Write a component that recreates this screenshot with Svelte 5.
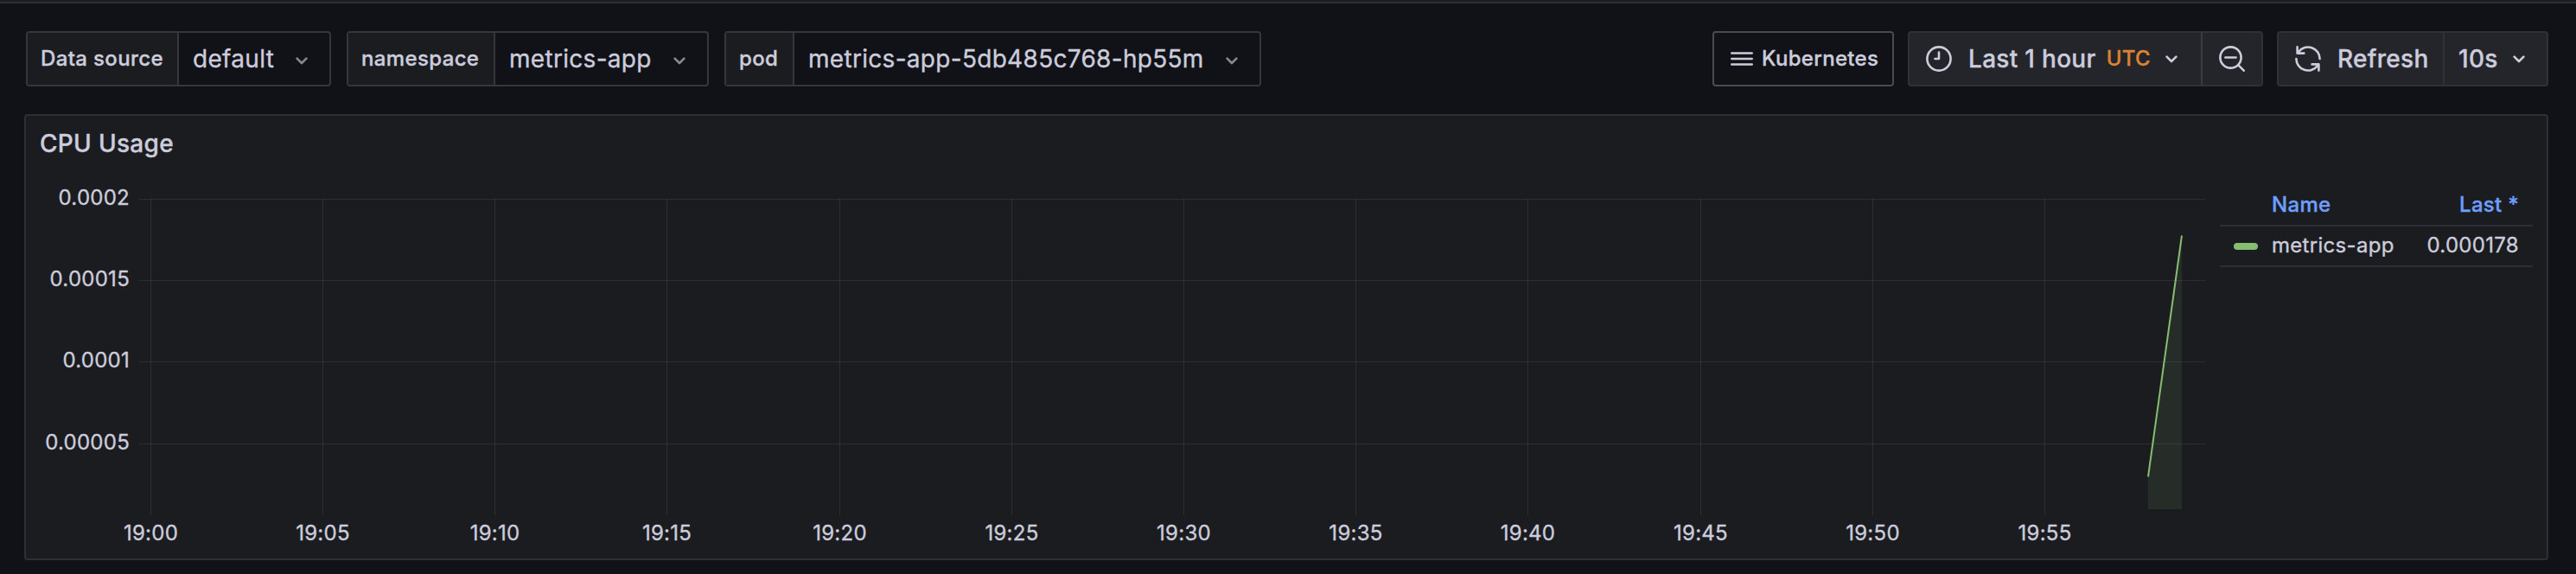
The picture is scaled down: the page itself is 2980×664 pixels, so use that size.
<script>
  const variables = [
    { label: 'Data source', value: 'default', labelWidth: 175, width: 353 },
    { label: 'namespace', value: 'metrics-app', labelWidth: 170, width: 419 },
    { label: 'pod', value: 'metrics-app-5db485c768-hp55m', labelWidth: 79, width: 621 }
  ];
  const yTicks = [
    { y: 230.5, label: '0.0002' },
    { y: 324.5, label: '0.00015' },
    { y: 418.5, label: '0.0001' },
    { y: 513.5, label: '0.00005' }
  ];
  const xTicks = Array.from({ length: 12 }, (_, i) => ({
    x: Math.floor(174.2 + i * 199.2) + 0.5,
    label: '19:' + String(i * 5).padStart(2, '0')
  }));
</script>

{#snippet chevron()}
  <svg class="chev" width="14" height="9" viewBox="0 0 14 9"><path d="M1.6 1.6 7 7l5.4-5.4" /></svg>
{/snippet}

<div class="page">
  <div class="topline"></div>
  <header class="toolbar">
    <div class="variables">
      {#each variables as v}
        <div class="variable" style="width:{v.width}px">
          <div class="label" style="width:{v.labelWidth}px">{v.label}</div>
          <div class="select"><span>{v.value}</span>{@render chevron()}</div>
        </div>
      {/each}
    </div>
    <div class="actions">
      <button class="link">
        <svg width="26" height="18" viewBox="0 0 26 18"><path d="M1.3 2.5h23.4M1.3 9h23.4M1.3 15.5h23.4" /></svg>
        <span>Kubernetes</span>
      </button>
      <div class="group">
        <button class="time">
          <svg width="30" height="30" viewBox="0 0 30 30"><circle cx="15" cy="15" r="13.6" /><path d="M15 7.5V15h-4.5" /></svg>
          <span class="range">Last 1 hour</span><span class="utc">UTC</span>{@render chevron()}
        </button>
        <button class="zoom" aria-label="Zoom out">
          <svg width="30" height="30" viewBox="0 0 30 30"><circle cx="13.5" cy="13.5" r="12.1" /><path d="M7.4 13.5h12.2M22.2 22.2l6.5 6.5" /></svg>
        </button>
      </div>
      <div class="group">
        <button class="refresh">
          <svg width="30" height="30" viewBox="0 0 30 30"><path d="M28.6 15A13.6 13.6 0 0 0 4.2 6.8L2.6 8.6M2.6 1.4v7.2h7.8M1.4 15a13.6 13.6 0 0 0 24.4 8.2l1.6-1.8M27.4 28.6v-7.2h-7.8" /></svg>
          <span>Refresh</span>
        </button>
        <button class="interval"><span>10s</span>{@render chevron()}</button>
      </div>
    </div>
  </header>

  <section class="panel">
    <h2>CPU Usage</h2>
    <div class="body">
      <svg class="chart" width="2530" height="444" viewBox="30 202 2530 444">
        <g class="grid">
          {#each yTicks as t}<path d="M161 {t.y}H2551" />{/each}
          {#each xTicks as t}<path d="M{t.x} 230V596" />{/each}
        </g>
        <path class="area" d="M2485 551 2524 272V589H2485Z" />
        <path class="line" d="M2485 551.5 2524 272.5" />
        {#each yTicks as t}<text x="150" y={t.y + 6.5} text-anchor="end">{t.label}</text>{/each}
        {#each xTicks as t}<text x={t.x} y="625" text-anchor="middle">{t.label}</text>{/each}
      </svg>
      <div class="legend">
        <div class="row head"><span>Name</span><span>Last *</span></div>
        <div class="row"><i class="swatch"></i><span>metrics-app</span><span>0.000178</span></div>
      </div>
    </div>
  </section>
</div>

<style>
  :global(body) { background: #111217; }
  .page {
    width: 2980px;
    height: 664px;
    overflow: hidden;
    background: #111217;
    color: #ccccdc;
    font-family: Inter, 'Liberation Sans', sans-serif;
    font-size: 28px;
    letter-spacing: 0.01071em;
    -webkit-text-stroke: 0.35px currentColor;
  }
  * { box-sizing: border-box; }
  svg { display: block; flex: none; fill: none; stroke: currentColor; stroke-width: 2.6; stroke-linecap: round; stroke-linejoin: round; }
  .topline { height: 4px; background: #1a1b1f; border-bottom: 2px solid #2e2f34; }
  .toolbar { display: flex; justify-content: space-between; padding: 32px 32px 32px 30px; }
  .variables { display: flex; gap: 18px; }
  .variable { display: flex; height: 64px; border: 2px solid #36373c; border-radius: 4px; }
  .label { flex: none; display: flex; align-items: center; padding: 0 0 2px 15px; background: #1b1c20; font-size: 24px; font-weight: 500; letter-spacing: 0.015em; border-right: 2px solid #36373c; }
  .select { flex: 1; display: flex; align-items: center; justify-content: space-between; padding: 0 25px 0 16px; white-space: nowrap; }
  .select .chev { color: #88898f; margin-top: 4px; }
  .actions { display: flex; gap: 16px; }
  button { display: flex; align-items: center; height: 64px; margin: 0; padding: 0; background: #24252b; color: inherit; font: inherit; font-weight: 500; letter-spacing: inherit; border: 2px solid #303136; white-space: nowrap; }
  .link { width: 210px; padding-left: 19px; gap: 10px; background: transparent; border-color: #4a4b50; border-radius: 4px; font-size: 24px; }
  .link span { padding-bottom: 2px; }
  .group { display: flex; }
  .group button:first-child { border-radius: 4px 0 0 4px; border-right: 0; }
  .group button:last-child { border-radius: 0 4px 4px 0; }
  .time { width: 339px; padding-left: 19px; }
  .range { margin-left: 19px; }
  .utc { margin: 0 17px 0 12px; padding-bottom: 2px; color: #dd8233; font-size: 24px; -webkit-text-stroke-color: #dd8233; }
  .zoom { width: 72px; padding-left: 19px; border-left-color: #3a3b40; }
  .refresh { width: 192px; padding-left: 19px; gap: 19px; }
  .interval { width: 122px; padding: 0 25px 0 16px; justify-content: space-between; }
  .panel { width: 2920px; height: 516px; margin-left: 28px; background: #1b1c20; border: 2px solid #2e2f34; border-radius: 4px; }
  h2 { height: 68px; margin: 0; padding: 15px 0 0 16px; font-size: 28px; line-height: 34px; font-weight: 500; }
  .body { display: flex; }
  .chart text { fill: #ccccdc; stroke: #ccccdc; stroke-width: 0.35; font-size: 24px; letter-spacing: 0.0107em; }
  .grid { stroke: #ccccdc; stroke-opacity: 0.1; stroke-width: 1; stroke-linecap: butt; }
  .grid path { stroke-width: 1; }
  .area { fill: #86bd70; fill-opacity: 0.1; stroke: none; }
  .line { stroke: #86bd70; stroke-width: 2; stroke-linecap: butt; }
  .legend { width: 362px; margin-left: 8px; padding-top: 12px; font-size: 24px; }
  .row { display: grid; grid-template-columns: 60px 1fr auto; align-items: center; height: 47px; padding-right: 16px; border-bottom: 2px solid #2e2f34; }
  .row span { padding-bottom: 2px; }
  .row.head { grid-template-columns: 1fr auto; height: 48px; padding-left: 60px; color: #6e9fff; -webkit-text-stroke-color: #6e9fff; font-weight: 500; }
  .swatch { width: 28px; height: 8px; margin-left: 16px; border-radius: 4px; background: #86bd70; }
</style>
